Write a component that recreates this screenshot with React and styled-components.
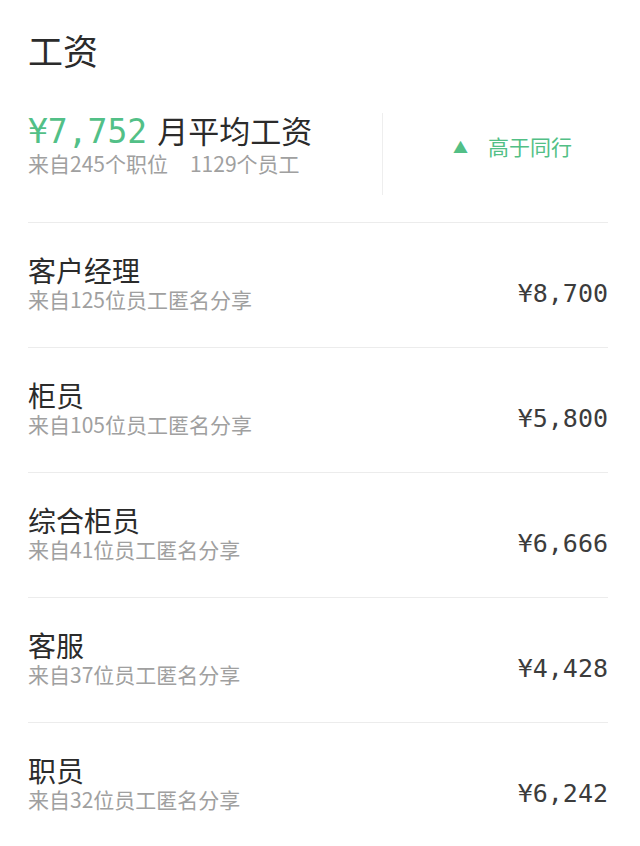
import React from 'react'
import styled, { createGlobalStyle } from 'styled-components'

const GlobalStyle = createGlobalStyle`
  body {
    margin: 0;
    background: #ffffff;
    font-family: "Noto Sans CJK SC", "Noto Sans", sans-serif;
  }
`

const jobs = [
  { name: '客户经理', count: 125, pay: '¥8,700' },
  { name: '柜员', count: 105, pay: '¥5,800' },
  { name: '综合柜员', count: 41, pay: '¥6,666' },
  { name: '客服', count: 37, pay: '¥4,428' },
  { name: '职员', count: 32, pay: '¥6,242' },
]

function App() {
  return (
    <Page>
      <GlobalStyle />
      <Title>工资</Title>
      <Summary>
        <SummaryMain>
          <AvgLine>
            <Amount>¥7,752</Amount>
            <AvgLabel>月平均工资</AvgLabel>
          </AvgLine>
          <Meta>来自245个职位<Gap />1129个员工</Meta>
        </SummaryMain>
        <Compare>
          <Arrow>▲</Arrow>
          高于同行
        </Compare>
      </Summary>
      {jobs.map((job) => (
        <Row key={job.name}>
          <div>
            <JobName>{job.name}</JobName>
            <Meta>来自{job.count}位员工匿名分享</Meta>
          </div>
          <Pay>{job.pay}</Pay>
        </Row>
      ))}
    </Page>
  )
}

export default App

const Page = styled.div`
  width: 640px;
  height: 846px;
  overflow: hidden;
  padding: 0 32px 0 28px;
  box-sizing: border-box;
`

const Title = styled.h1`
  margin: 0;
  padding-top: 26px;
  font-size: 35px;
  font-weight: 400;
  line-height: 48px;
  color: #2b2b2b;
`

const Summary = styled.div`
  display: flex;
  align-items: center;
  padding: 39px 0 27px;
  border-bottom: 1px solid #ececec;
`

const SummaryMain = styled.div`
  flex: 0 0 355px;
  height: 82px;
  box-sizing: border-box;
  border-right: 1px solid #eeeeee;
`

const AvgLine = styled.div`
  display: flex;
  align-items: baseline;
  gap: 10px;
  height: 34px;
  line-height: 34px;
  margin-bottom: 4px;
`

const Amount = styled.span`
  font-family: "DejaVu Sans Mono", "Noto Sans CJK SC", monospace;
  font-size: 33px;
  color: #52c087;
`

const AvgLabel = styled.span`
  font-size: 31px;
  color: #2b2b2b;
`

const Meta = styled.div`
  font-size: 21px;
  line-height: 24px;
  color: #a0a0a0;
  white-space: nowrap;
`

const Gap = styled.span`
  display: inline-block;
  width: 22px;
`

const Compare = styled.div`
  flex: 1;
  display: flex;
  justify-content: center;
  align-items: center;
  padding: 0 0 16px 34px;
  font-size: 21px;
  color: #52bf86;
`

const Arrow = styled.span`
  font-size: 15px;
  margin-right: 20px;
`

const Row = styled.div`
  display: flex;
  justify-content: space-between;
  align-items: center;
  height: 125px;
  padding-bottom: 6px;
  box-sizing: border-box;
  border-bottom: 1px solid #ececec;
`

const JobName = styled.div`
  font-size: 28px;
  line-height: 34px;
  color: #2b2b2b;
`

const Pay = styled.div`
  font-family: "DejaVu Sans Mono", "Noto Sans CJK SC", monospace;
  font-size: 25px;
  color: #3c3c3c;
  padding-top: 22px;
`
